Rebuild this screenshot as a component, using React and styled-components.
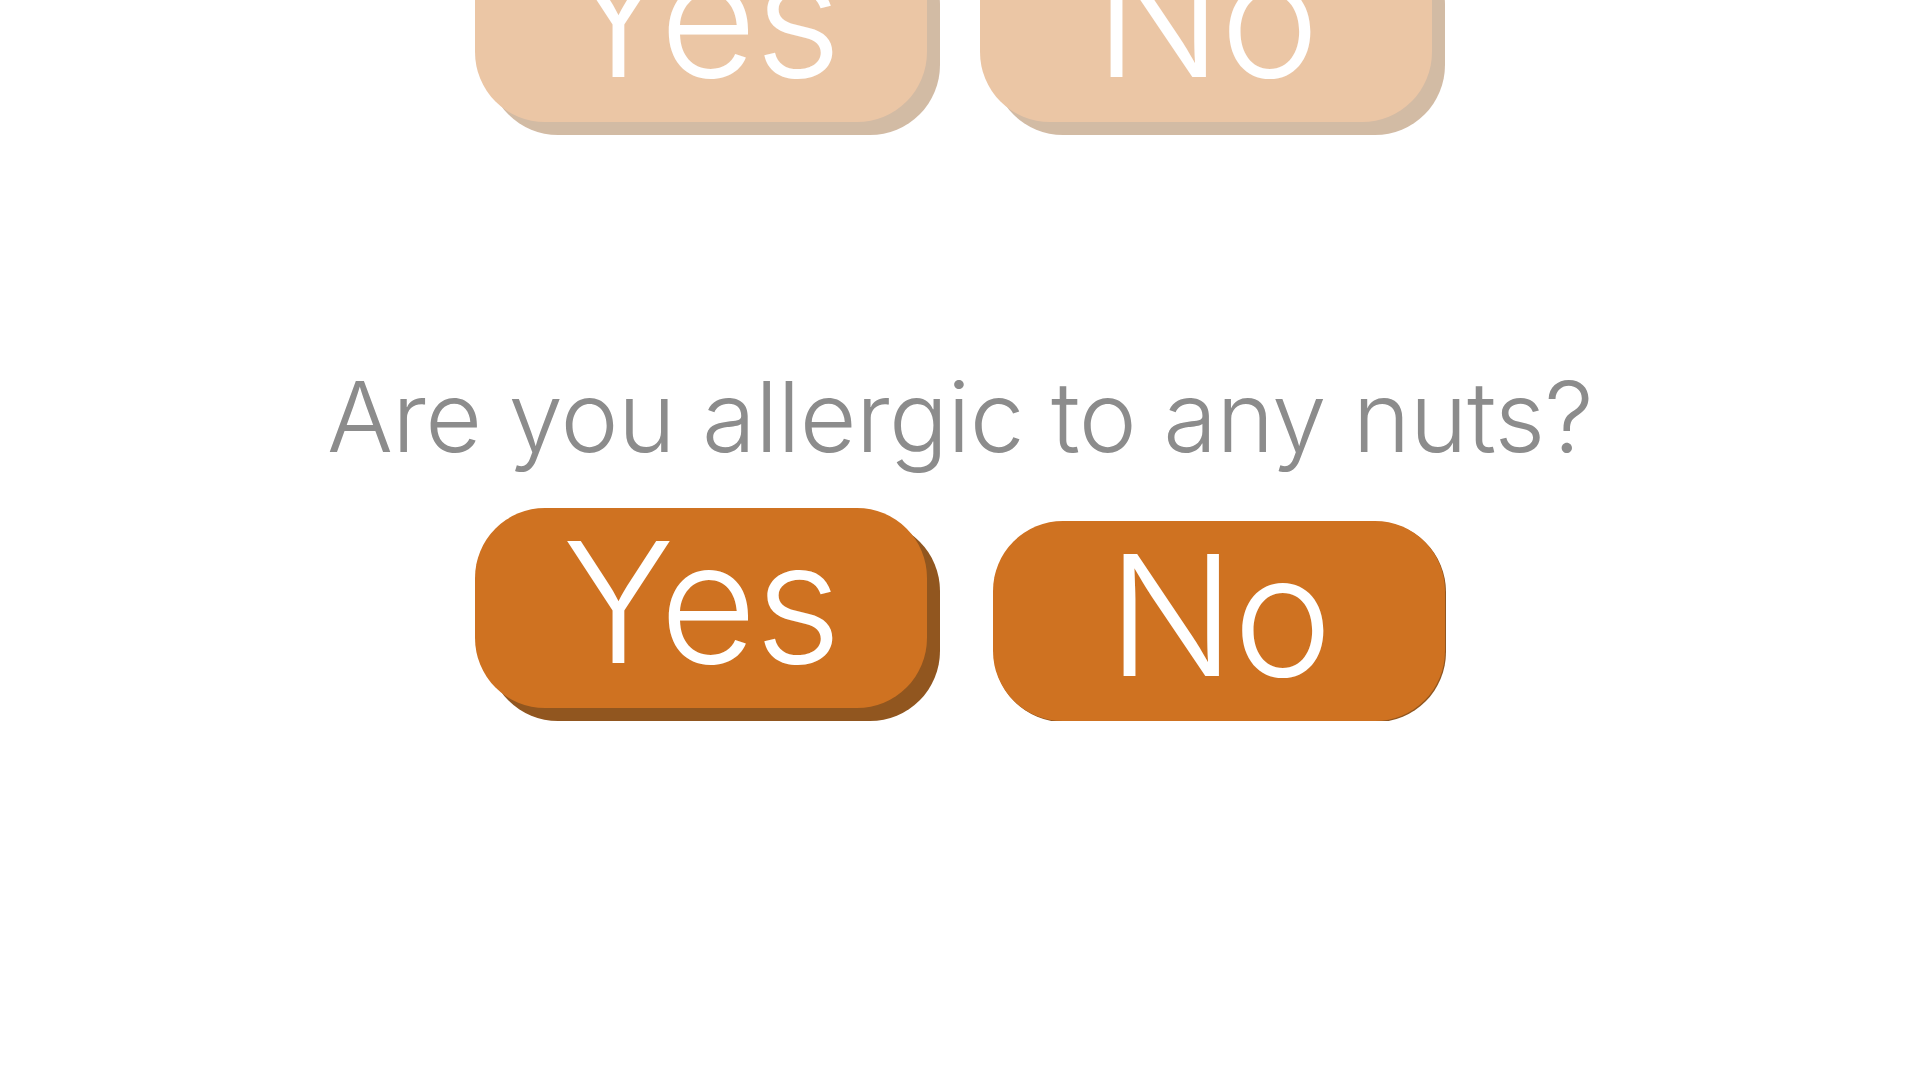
import React, { useState } from 'react';
import styled, { createGlobalStyle, css } from 'styled-components';

const GlobalStyle = createGlobalStyle`
  html, body {
    margin: 0;
    padding: 0;
    background: #ffffff;
    overflow: hidden;
  }
  body {
    font-family: Inter, Lato, sans-serif;
  }
`;

const Survey = styled.div`
  display: flex;
  flex-direction: column;
  align-items: center;
  gap: 219px;
  margin-top: -232px;
`;

const QuestionBlock = styled.section`
  display: flex;
  flex-direction: column;
  align-items: center;
  opacity: ${(props) => (props.answered ? 0.4 : 1)};
`;

const Question = styled.h2`
  margin: 0;
  height: 120px;
  font-family: Inter, Lato, sans-serif;
  font-weight: 300;
  font-size: 98px;
  line-height: 126px;
  letter-spacing: -0.6px;
  color: #8c8c8c;
  white-space: nowrap;
`;

const Answers = styled.div`
  display: flex;
  gap: 40px;
  margin-top: 34px;
`;

const Slot = styled.div`
  width: 465px;
  height: 213px;
`;

const AnswerButton = styled.button`
  display: flex;
  align-items: center;
  justify-content: center;
  width: 452px;
  height: 200px;
  padding: 0 0 12px;
  border: none;
  border-radius: 70px;
  background: #cf7221;
  color: #ffffff;
  font-family: Inter, Lato, sans-serif;
  font-weight: 300;
  font-size: 168px;
  line-height: 1;
  letter-spacing: -2px;
  cursor: pointer;
  box-shadow: 13px 13px 0 #91561f;
  outline: none;
  ${(props) =>
    props.pressed &&
    css`
      transform: translate(13px, 13px);
      box-shadow: 1px 1px 0 #91561f;
    `}
`;

const questions = [
  { id: 1, text: 'Do you have any food allergies?', answered: true },
  { id: 2, text: 'Are you allergic to any nuts?', answered: false },
];

const App = () => {
  const [pressed, setPressed] = useState({ 2: 'No' });

  return (
    <>
      <GlobalStyle />
      <Survey>
        {questions.map((q) => (
          <QuestionBlock key={q.id} answered={q.answered}>
            <Question>{q.text}</Question>
            <Answers>
              {['Yes', 'No'].map((label) => (
                <Slot key={label}>
                  <AnswerButton
                    pressed={pressed[q.id] === label}
                    onClick={() => setPressed({ ...pressed, [q.id]: label })}
                  >
                    {label}
                  </AnswerButton>
                </Slot>
              ))}
            </Answers>
          </QuestionBlock>
        ))}
      </Survey>
    </>
  );
};

export default App;
